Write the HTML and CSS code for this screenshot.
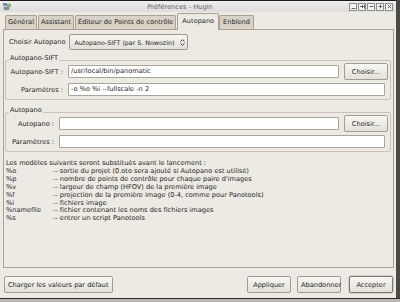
FILE: index.html
```html
<!DOCTYPE html>
<html lang="fr">
<head>
  <meta charset="UTF-8" />
  <title>Préférences - Hugin</title>
  <link rel="stylesheet" href="styles.css">
</head>
<body>
<div class="screen">
  <div class="window">
    <div class="titlebar">
      <svg class="app-icon" width="8" height="7" viewBox="0 0 8 7">
        <rect x="0" y="0" width="8" height="7" fill="#cfd6dd"/>
        <rect x="0" y="0" width="4" height="3" fill="#6f93b8"/>
        <rect x="4" y="1" width="4" height="3" fill="#8fb06a"/>
        <rect x="1" y="4" width="5" height="3" fill="#7d8a96"/>
      </svg>
      <div class="title">Préférences - Hugin</div>
      <div class="wm-buttons">
        <span class="wm-btn"><svg width="5" height="5" viewBox="0 0 5 5"><path d="M0.5 4.5h4" stroke="#666" stroke-width="1"/></svg></span>
        <span class="wm-btn"><svg width="5" height="5" viewBox="0 0 5 5"><path d="M0 2.5h3.5M2 1l1.5 1.5L2 4M4.5 0.5v4" stroke="#666" stroke-width="1" fill="none"/></svg></span>
        <span class="wm-btn"><svg width="5" height="5" viewBox="0 0 5 5"><path d="M0.5 2.5h4" stroke="#666" stroke-width="1"/></svg></span>
        <span class="wm-btn"><svg width="5" height="5" viewBox="0 0 5 5"><path d="M0.5 2.5h4M2.5 0.5v4" stroke="#666" stroke-width="1"/></svg></span>
        <span class="wm-btn"><svg width="5" height="5" viewBox="0 0 5 5"><path d="M0.8 0.8l3.4 3.4M4.2 0.8L0.8 4.2" stroke="#666" stroke-width="1"/></svg></span>
      </div>
    </div>

    <div class="content">
      <div class="tabs">
        <div class="tab">Général</div>
        <div class="tab">Assistant</div>
        <div class="tab">Éditeur de Points de contrôle</div>
        <div class="tab active">Autopano</div>
        <div class="tab">Enblend</div>
      </div>

      <div class="panel">
        <div class="chooser">
          <span class="chooser-label">Choisir Autopano</span>
          <div class="combo">
            <span>Autopano-SIFT (par S. Nowozin)</span>
            <svg width="5" height="7" viewBox="0 0 5 7"><path d="M0.5 2.5L2.5 0.7L4.5 2.5M0.5 4.5L2.5 6.3L4.5 4.5" stroke="#333" stroke-width="0.9" fill="none"/></svg>
          </div>
        </div>

        <div class="group sift">
          <div class="group-title">Autopano-SIFT</div>
          <div class="field">
            <label>Autopano-SIFT :</label>
            <div class="input">/usr/local/bin/panomatic</div>
            <button class="btn browse">Choisir...</button>
          </div>
          <div class="field">
            <label>Paramètres :</label>
            <div class="input wide">-o %o %i --fullscale -n 2</div>
          </div>
        </div>

        <div class="group pano">
          <div class="group-title">Autopano</div>
          <div class="field">
            <label>Autopano :</label>
            <div class="input"></div>
            <button class="btn browse">Choisir...</button>
          </div>
          <div class="field">
            <label>Paramètres :</label>
            <div class="input wide"></div>
          </div>
        </div>

        <div class="help">
          <p>Les modèles suivants seront substitués avant le lancement :</p>
          <div class="tokens">
            <span>%o</span><span>-- sortie du projet (0.oto sera ajouté si Autopano est utilisé)</span>
            <span>%p</span><span>-- nombre de points de contrôle pour chaque paire d'images</span>
            <span>%v</span><span>-- largeur de champ (HFOV) de la première image</span>
            <span>%f</span><span>-- projection de la première image (0-4, comme pour Panotools)</span>
            <span>%i</span><span>-- fichiers image</span>
            <span>%namefile</span><span>-- fichier contenant les noms des fichiers images</span>
            <span>%s</span><span>-- entrer un script Panotools</span>
          </div>
        </div>
      </div>

      <div class="footer">
        <button class="btn">Charger les valeurs par défaut</button>
        <div class="footer-right">
          <button class="btn action">Appliquer</button>
          <button class="btn action">Abandonner</button>
          <button class="btn action default">Accepter</button>
        </div>
      </div>
    </div>
  </div>
  <div class="taskbar"></div>
</div>
</body>
</html>
```

FILE: styles.css
```css
body {
  margin: 0;
  background: #4a4a48;
  font-family: 'DejaVu Sans', sans-serif;
  font-size: 6.6px;
  color: #1f1f1f;
}

.screen {
  width: 400px;
  height: 302px;
  display: flex;
  flex-direction: column;
  overflow: hidden;
}

.window {
  width: 396px;
  height: 298px;
  background: #edeae4;
  display: flex;
  flex-direction: column;
}

.taskbar {
  flex: 1;
  border-top: 1px solid #2a2a2a;
  background: #b9b6b0;
}

/* window manager title bar */
.titlebar {
  height: 11px;
  border-top: 1px solid #1a1a1a;
  background: linear-gradient(#eeeeec, #dedddb);
  display: flex;
  align-items: center;
  padding: 0 3px;
}

.app-icon {
  flex: none;
}

.title {
  flex: 1;
  text-align: center;
  color: #5e5e5e;
  font-size: 6.7px;
  line-height: 10px;
}

.wm-buttons {
  display: flex;
  gap: 1px;
}

.wm-btn {
  width: 6px;
  height: 6px;
  border: 1px solid #8e8e8c;
  background: #f4f4f2;
  display: flex;
  align-items: center;
  justify-content: center;
}

.content {
  flex: 1;
  display: flex;
  flex-direction: column;
  padding: 1px 2px 0 3px;
}

/* notebook tabs */
.tabs {
  display: flex;
  align-items: flex-end;
  height: 16px;
  padding-left: 2px;
}

.tab {
  height: 13px;
  line-height: 13px;
  padding: 0 2px;
  margin-right: 1px;
  background: #d8d2c7;
  border: 1px solid #a8a297;
  border-bottom: none;
  border-radius: 2px 2px 0 0;
}

.tab.active {
  height: 16px;
  line-height: 15px;
  padding: 0 4px;
  background: #edeae4;
  margin-right: 0;
  margin-bottom: -1px;
  position: relative;
}

.tab:last-child {
  padding: 0 3px;
}

.panel {
  flex: 1;
  border: 1px solid #a8a297;
  padding: 4px 1px 0 1px;
  display: flex;
  flex-direction: column;
}

.chooser {
  display: flex;
  align-items: center;
  gap: 4px;
  padding-left: 4px;
}

.combo {
  width: 111px;
  height: 14px;
  padding: 0 2px 0 4px;
  border: 1px solid #9d988e;
  border-radius: 2px;
  background: linear-gradient(#f7f6f3, #e3dfd8);
  display: flex;
  align-items: center;
  justify-content: space-between;
  white-space: nowrap;
  font-size: 6.3px;
}

/* framed groups */
.group {
  border: 1px solid #c9c4ba;
  border-radius: 2px;
  padding: 2px 2px 3px 4px;
  margin-right: 1px;
  display: flex;
  flex-direction: column;
  gap: 3px;
}

.group.sift {
  margin-top: 10px;
}

.group.pano {
  margin-top: 12px;
}

.group-title {
  align-self: flex-start;
  line-height: 8px;
  margin: -9px 0 -2px -1px;
  padding: 0 1px;
  background: #edeae4;
}

.field {
  display: flex;
  align-items: center;
  gap: 5px;
  min-height: 13px;
}

.field label {
  text-align: right;
  flex: none;
  white-space: nowrap;
}

.sift .field label {
  width: 53px;
}

.pano .field label {
  width: 44px;
}

.input {
  flex: 1;
  height: 11px;
  line-height: 11px;
  padding-left: 2px;
  background: #fff;
  border: 1px solid #aaa59b;
  border-radius: 1px;
}

.input.wide {
  margin-right: 3px;
}

.btn {
  font-family: 'DejaVu Sans', sans-serif;
  font-size: 6.6px;
  color: #1f1f1f;
  height: 17px;
  padding: 0 3px;
  background: linear-gradient(#f8f7f5, #e4e0d9);
  border: 1px solid #a29d93;
  border-radius: 2px;
  white-space: nowrap;
}

.btn.browse {
  width: 44px;
  flex: none;
}

/* placeholder help */
.help {
  margin-top: 8px;
  padding-left: 1px;
  line-height: 7.9px;
}

.help p {
  margin: 0;
}

.tokens {
  display: grid;
  grid-template-columns: 47px auto;
}

.footer {
  height: 30px;
  display: flex;
  align-items: flex-start;
  justify-content: space-between;
  padding: 8px 1px 0 1px;
  box-sizing: border-box;
}

.footer-right {
  display: flex;
  gap: 6px;
}

.btn.action {
  width: 44px;
}

.btn.default {
  margin-left: 2px;
  border-color: #7d786f;
  box-shadow: 0 0 0 1px #d5d0c7;
}
```
